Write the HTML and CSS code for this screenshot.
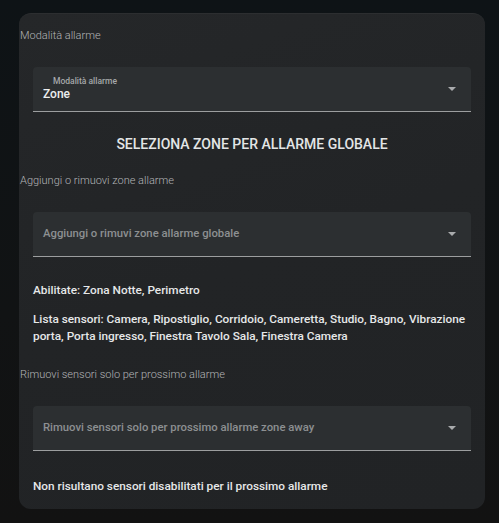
FILE: index.html
```html
<!DOCTYPE html>
<html lang="it">
<head>
<meta charset="utf-8">
<title>Allarme</title>
<link rel="stylesheet" href="styles.css">
</head>
<body>
<div class="card">
  <div class="label">Modalità allarme</div>
  <div class="select filled">
    <span class="float">Modalità allarme</span>
    <span class="value">Zone</span>
    <span class="arrow"></span>
  </div>
  <div class="heading">SELEZIONA ZONE PER ALLARME GLOBALE</div>
  <div class="label l2">Aggiungi o rimuovi zone allarme</div>
  <div class="select">
    <span class="placeholder">Aggiungi o rimuvi zone allarme globale</span>
    <span class="arrow"></span>
  </div>
  <div class="info first">Abilitate: Zona Notte, Perimetro</div>
  <div class="info second">Lista sensori: Camera, Ripostiglio, Corridoio, Cameretta, Studio, Bagno, Vibrazione porta, Porta ingresso, Finestra Tavolo Sala, Finestra Camera</div>
  <div class="label l3">Rimuovi sensori solo per prossimo allarme</div>
  <div class="select">
    <span class="placeholder">Rimuovi sensori solo per prossimo allarme zone away</span>
    <span class="arrow"></span>
  </div>
  <div class="info last">Non risultano sensori disabilitati per il prossimo allarme</div>
</div>
</body>
</html>
```
FILE: styles.css
```css
* { box-sizing: border-box; }
html, body { margin: 0; padding: 0; }
body {
  width: 499px;
  height: 523px;
  overflow: hidden;
  background: linear-gradient(180deg, #0e1316 0%, #111314 60%, #121212 100%);
  font-family: Roboto, "Noto Sans", sans-serif;
  padding: 13px 0 0 19px;
}
.card {
  width: 466px;
  height: 496px;
  border-radius: 12px;
  background: linear-gradient(160deg, #252729 0%, #222426 50%, #212325 100%);
  border-top: 1px solid #2c2e30;
  padding: 15px 14px 0 14px;
  display: flex;
  flex-direction: column;
}
.label {
  margin-left: -13px;
  font-size: 11px;
  line-height: 14px;
  color: #b3b5b7;
  font-weight: 300;
}
.select {
  position: relative;
  height: 45px;
  margin-top: 24px;
  background: #2c2f31;
  border-radius: 4px 4px 0 0;
  border-bottom: 1px solid #9c9e9f;
  display: flex;
  flex-direction: column;
  justify-content: center;
  padding: 0 10px;
}
.select .float {
  position: absolute;
  left: 20px;
  top: 9px;
  font-size: 8.5px;
  line-height: 10px;
  color: #a6a8aa;
  font-weight: 500;
}
.select .value {
  margin-top: 9px;
  font-size: 12px;
  line-height: 14px;
  color: #eceeef;
  font-weight: 500;
}
.select .placeholder {
  font-size: 11.3px;
  line-height: 14px;
  color: #8d9092;
  font-weight: 500;
}
.arrow {
  position: absolute;
  right: 15px;
  top: 20px;
  width: 0;
  height: 0;
  border-left: 4px solid transparent;
  border-right: 4px solid transparent;
  border-top: 4px solid #a9abad;
}
.heading {
  margin-top: 23px;
  text-align: center;
  font-size: 14px;
  line-height: 18px;
  color: #e3e5e6;
  font-weight: 500;
}
.l2 { margin-top: 21px; }
.l3 { margin-top: 23px; }
.info {
  font-size: 11.8px;
  line-height: 17px;
  color: #e6e8e9;
  font-weight: 500;
}
.first { margin-top: 25px; }
.second { margin-top: 12px; }
.last { margin-top: 27px; }
```
